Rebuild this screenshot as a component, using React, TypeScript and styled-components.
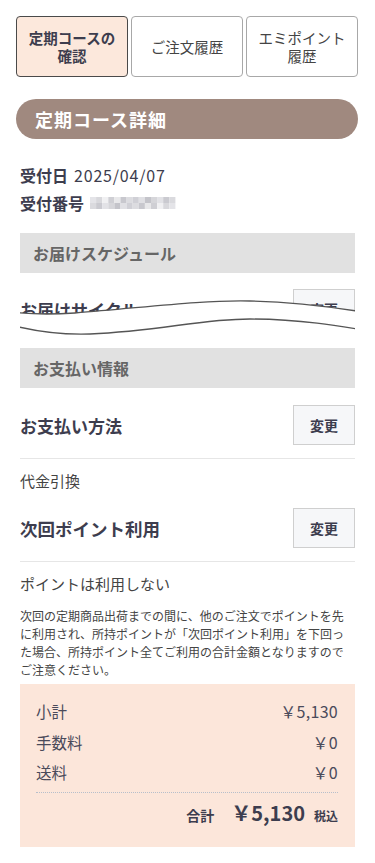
import React from "react";
import styled, { createGlobalStyle } from "styled-components";

const Global = createGlobalStyle`
  html, body { margin: 0; padding: 0; background: #fff; }
  body {
    font-family: "Noto Sans CJK JP", "Noto Sans", sans-serif;
    color: #3d3d4e;
    -webkit-font-smoothing: antialiased;
  }
  * { box-sizing: border-box; }
`;

const Page = styled.div`
  width: 375px;
  padding: 16px 17px 20px 16px;
`;

const Tabs = styled.div`
  display: grid;
  grid-template-columns: repeat(3, 1fr);
  gap: 3px;
`;

const Tab = styled.div<{ $active?: boolean }>`
  height: 61px;
  display: flex;
  align-items: center;
  justify-content: center;
  text-align: center;
  border-radius: 4px;
  border: 1px solid ${(p) => (p.$active ? "#4a4a4a" : "#a8a8a8")};
  background: ${(p) => (p.$active ? "#fce8dc" : "#fff")};
  font-size: 14.5px;
  line-height: 18px;
  font-weight: ${(p) => (p.$active ? 700 : 400)};
  color: ${(p) => (p.$active ? "#3d3d4e" : "#444")};
`;

const Pill = styled.h2`
  margin: 22px 0 0;
  height: 40px;
  border-radius: 20px;
  background: #a0897f;
  color: #fff;
  font-size: 18px;
  letter-spacing: 1px;
  font-weight: 700;
  line-height: 40px;
  padding-left: 19px;
`;

const Inner = styled.div`
  padding: 0 3px 0 4px;
`;

const InfoList = styled.div`
  margin-top: 22px;
`;

const InfoRow = styled.div`
  display: flex;
  align-items: center;
  gap: 6px;
  height: 28px;
  font-size: 16px;
`;

const InfoLabel = styled.span`
  font-weight: 700;
`;

const DateText = styled.span`
  letter-spacing: 0.8px;
`;

const SectionHead = styled.div<{ $mt?: number }>`
  margin-top: ${(p) => p.$mt ?? 0}px;
  height: 40px;
  background: #e1e1e1;
  color: #666;
  font-size: 16px;
  font-weight: 700;
  line-height: 40px;
  padding-left: 13px;
`;

const Cut = styled.div`
  position: relative;
  height: 75px;
  overflow: hidden;
`;

const Wave = styled.svg`
  position: absolute;
  left: -20px;
  top: 22px;
  width: 375px;
  height: 53px;
`;

const TitleRow = styled.div<{ $pt?: number }>`
  display: flex;
  align-items: center;
  justify-content: space-between;
  padding: ${(p) => p.$pt ?? 16}px 0 13px;
  border-bottom: 1px solid #e6e6e6;
`;

const RowTitle = styled.div<{ $size?: number }>`
  font-size: ${(p) => p.$size ?? 17}px;
  font-weight: 700;
  color: #3d3d4e;
`;

const ChangeButton = styled.button`
  width: 62px;
  height: 40px;
  background: #f6f7f9;
  border: 1px solid #cfcfcf;
  border-radius: 0;
  font-family: inherit;
  font-size: 14px;
  font-weight: 700;
  color: #3d3d4e;
  padding: 0;
`;

const Value = styled.div`
  padding-top: 11px;
  font-size: 15px;
  line-height: 22px;
  color: #444;
`;

const Note = styled.p`
  margin: 12px 0 0;
  font-size: 12px;
  line-height: 18px;
  color: #444;
`;

const Summary = styled.div`
  margin-top: 5px;
  background: #fce6da;
  padding: 12px 17px 21px 16px;
  height: 163px;
`;

const SumRow = styled.div`
  display: flex;
  justify-content: space-between;
  align-items: center;
  height: 30.5px;
  font-size: 15.5px;
  color: #4a4a5a;
`;

const SumValue = styled.span`
  font-size: 16px;
  letter-spacing: 0.3px;
`;

const TotalRow = styled.div`
  margin-top: 4px;
  border-top: 1px dotted #b7bfcb;
  display: flex;
  justify-content: flex-end;
  align-items: baseline;
  padding-top: 5px;
  height: 36px;
  color: #3d3d4e;
  font-weight: 700;
`;

const TotalLabel = styled.span`
  font-size: 14px;
  margin-right: 17px;
`;

const TotalValue = styled.span`
  font-size: 20px;
  margin-right: 9px;
`;

const TaxLabel = styled.span`
  font-size: 12px;
`;

const Mosaic = () => {
  const cells = [
    "#e4e4e8", "#d8d8dc", "#f0f0f2", "#cfcfd4", "#e8e8ea", "#c8c8ce", "#dcdce0",
    "#d0d0d6", "#e0e0e4", "#c4c4ca", "#d6d6da", "#e2e2e6", "#cacad0", "#dadade",
  ];
  return (
    <svg width="86" height="12" viewBox="0 0 86 12">
      {cells.map((c, i) => (
        <rect key={i} x={i * 6.1} y={0} width={6.1} height={6} fill={c} />
      ))}
      {cells.slice().reverse().map((c, i) => (
        <rect key={"b" + i} x={i * 6.1} y={6} width={6.1} height={6} fill={c} />
      ))}
    </svg>
  );
};

const TOP_LINE = "M0,15 C20,19 45,20 75,18 C150,12 200,5 250,6 C300,7 340,13 375,19";
const BOTTOM_LINE = "M0,27 C30,36 60,40 90,39 C160,36 200,24 250,24 C300,24 340,31 375,37";

export default function App() {
  return (
    <>
      <Global />
      <Page>
        <Tabs>
          <Tab $active>
            定期コースの
            <br />
            確認
          </Tab>
          <Tab>ご注文履歴</Tab>
          <Tab>
            エミポイント
            <br />
            履歴
          </Tab>
        </Tabs>
        <Pill>定期コース詳細</Pill>
        <Inner>
          <InfoList>
            <InfoRow>
              <InfoLabel>受付日</InfoLabel>
              <DateText>2025/04/07</DateText>
            </InfoRow>
            <InfoRow>
              <InfoLabel>受付番号</InfoLabel>
              <Mosaic />
            </InfoRow>
          </InfoList>

          <SectionHead $mt={16}>お届けスケジュール</SectionHead>
          <Cut>
            <TitleRow $pt={16}>
              <RowTitle $size={17}>お届けサイクル</RowTitle>
              <ChangeButton>変更</ChangeButton>
            </TitleRow>
            <Wave viewBox="0 0 375 53" preserveAspectRatio="none">
              <path d={`${TOP_LINE} L375,53 L0,53 Z`} fill="#fff" />
              <path d={TOP_LINE} fill="none" stroke="#555" strokeWidth="1.3" />
              <path d={BOTTOM_LINE} fill="none" stroke="#555" strokeWidth="1.3" />
            </Wave>
          </Cut>

          <SectionHead>お支払い情報</SectionHead>
          <TitleRow $pt={17}>
            <RowTitle $size={17}>お支払い方法</RowTitle>
            <ChangeButton>変更</ChangeButton>
          </TitleRow>
          <Value>代金引換</Value>
          <TitleRow $pt={16}>
            <RowTitle $size={17.5}>次回ポイント利用</RowTitle>
            <ChangeButton>変更</ChangeButton>
          </TitleRow>
          <Value>ポイントは利用しない</Value>
          <Note>
            次回の定期商品出荷までの間に、他のご注文でポイントを先に利用され、所持ポイントが「次回ポイント利用」を下回った場合、所持ポイント全てご利用の合計金額となりますのでご注意ください。
          </Note>

          <Summary>
            <SumRow>
              <span>小計</span>
              <SumValue>￥5,130</SumValue>
            </SumRow>
            <SumRow>
              <span>手数料</span>
              <SumValue>￥0</SumValue>
            </SumRow>
            <SumRow>
              <span>送料</span>
              <SumValue>￥0</SumValue>
            </SumRow>
            <TotalRow>
              <TotalLabel>合計</TotalLabel>
              <TotalValue>￥5,130</TotalValue>
              <TaxLabel>税込</TaxLabel>
            </TotalRow>
          </Summary>
        </Inner>
      </Page>
    </>
  );
}
